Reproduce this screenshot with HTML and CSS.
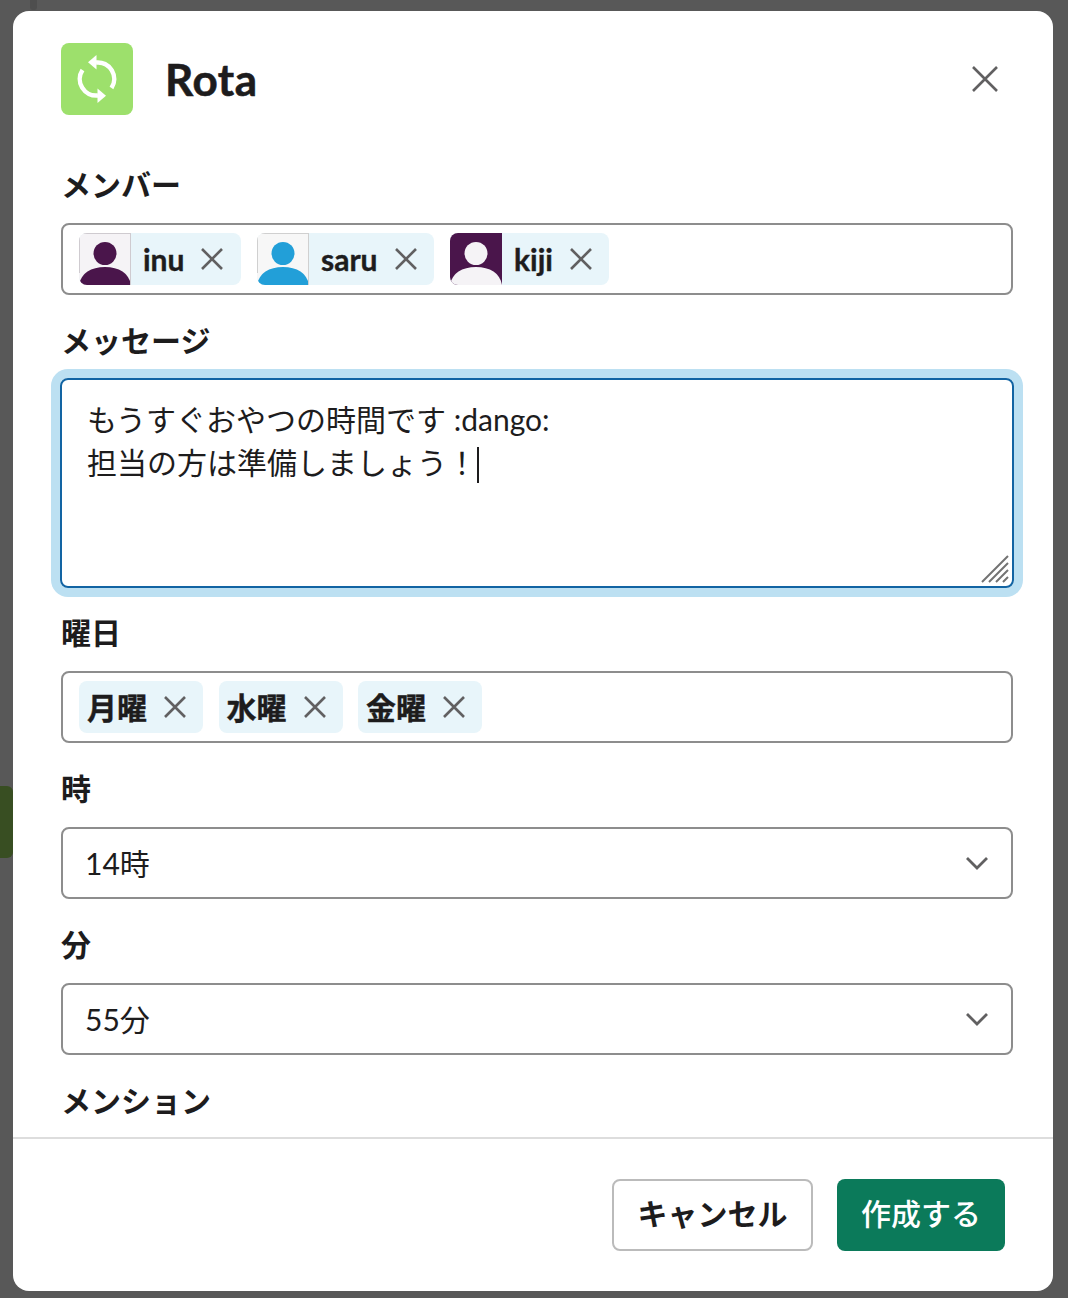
FILE: index.html
```html
<!DOCTYPE html>
<html lang="ja">
<head>
<meta charset="utf-8">
<title>Rota</title>
<link rel="stylesheet" href="styles.css">
</head>
<body>
<div class="backdrop-bar"></div>
<div class="backdrop-btn"></div>
<main class="modal">
  <header class="modal-head">
    <div class="app-icon">
      <svg width="72" height="72" viewBox="0 0 72 72" fill="none">
        <path d="M35 19.5A16.500 16.500 0 0 1 50.500 45" stroke="#fff" stroke-width="4.500"/>
        <path d="M37 52.500A16.500 16.500 0 0 1 21.500 27" stroke="#fff" stroke-width="4.500"/>
        <path d="M35.500 12V26.500L27 19.300Z" fill="#fff"/>
        <path d="M36.500 45.500V60L45 52.700Z" fill="#fff"/>
      </svg>
    </div>
    <h1 class="title">Rota</h1>
    <svg class="close" width="28" height="28" viewBox="0 0 28 28"><path d="M2 2L26 26M26 2L2 26" stroke="#616061" stroke-width="2.600"/></svg>
  </header>
  <div class="modal-body">
    <label class="label">メンバー</label>
    <div class="field chips">
      <span class="chip"><svg class="avatar" viewBox="0 0 52 52"><rect width="52" height="52" fill="#f5f3f6"/><circle cx="26" cy="20.500" r="11.500" fill="#4a154b"/><path d="M0 52C2 40 12 34 26 34S50 40 52 52Z" fill="#4a154b"/><path d="M51.500 0V52M0 .5H52M.5 0V40" fill="none" stroke="#cfcbd0"/></svg><b>inu</b><svg class="x" viewBox="0 0 24 24"><path d="M2 2L22 22M22 2L2 22"/></svg></span>
      <span class="chip"><svg class="avatar" viewBox="0 0 52 52"><rect width="52" height="52" fill="#f7f7f7"/><circle cx="26" cy="20.500" r="11.500" fill="#229fd8"/><path d="M0 52C2 40 12 34 26 34S50 40 52 52Z" fill="#229fd8"/><path d="M51.500 0V52M0 .5H52M.5 0V40" fill="none" stroke="#d0d0d0"/></svg><b>saru</b><svg class="x" viewBox="0 0 24 24"><path d="M2 2L22 22M22 2L2 22"/></svg></span>
      <span class="chip"><svg class="avatar" viewBox="0 0 52 52"><rect width="52" height="52" fill="#4a154b"/><circle cx="26" cy="20.500" r="11.500" fill="#f5f3f6"/><path d="M0 52C2 40 12 34 26 34S50 40 52 52Z" fill="#f5f3f6"/></svg><b>kiji</b><svg class="x" viewBox="0 0 24 24"><path d="M2 2L22 22M22 2L2 22"/></svg></span>
    </div>
    <label class="label">メッセージ</label>
    <div class="textarea">
      <div>もうすぐおやつの時間です :dango:</div>
      <div>担当の方は準備しましょう！<span class="caret"></span></div>
      <svg class="grip" width="28" height="28" viewBox="0 0 28 28"><path d="M1 27L27 1M8 27L27 8M15 27L27 15M22 27L27 22" stroke="#737373" stroke-width="2"/></svg>
    </div>
    <label class="label">曜日</label>
    <div class="field chips days">
      <span class="chip day"><b>月曜</b><svg class="x" viewBox="0 0 24 24"><path d="M2 2L22 22M22 2L2 22"/></svg></span>
      <span class="chip day"><b>水曜</b><svg class="x" viewBox="0 0 24 24"><path d="M2 2L22 22M22 2L2 22"/></svg></span>
      <span class="chip day"><b>金曜</b><svg class="x" viewBox="0 0 24 24"><path d="M2 2L22 22M22 2L2 22"/></svg></span>
    </div>
    <label class="label">時</label>
    <div class="field select"><span>14時</span><svg class="chev" width="24" height="14" viewBox="0 0 24 14" fill="none"><path d="M2 2L12 12L22 2" stroke="#616061" stroke-width="2.800"/></svg></div>
    <label class="label">分</label>
    <div class="field select"><span>55分</span><svg class="chev" width="24" height="14" viewBox="0 0 24 14" fill="none"><path d="M2 2L12 12L22 2" stroke="#616061" stroke-width="2.800"/></svg></div>
    <label class="label">メンション</label>
  </div>
  <footer class="modal-foot">
    <button class="btn cancel">キャンセル</button>
    <button class="btn primary">作成する</button>
  </footer>
</main>
</body>
</html>
```
FILE: styles.css
```css
* { box-sizing: border-box; }
html, body { margin: 0; height: 100%; }
body {
  background: #585858;
  font-family: Lato, "Noto Sans CJK JP", sans-serif;
  color: #1d1c1d;
  font-size: 30px;
  overflow: hidden;
  padding: 11px 15px 7px 13px;
}
.backdrop-bar { position: absolute; left: 30px; top: 0; width: 7px; height: 10px; background: #4e4e4e; border-radius: 0 0 3px 3px; }
.backdrop-btn { position: absolute; left: 0; top: 786px; width: 13px; height: 72px; background: #384e22; border-radius: 0 6px 6px 0; }
.modal {
  position: relative;
  width: 1040px;
  height: 1280px;
  background: #fff;
  border-radius: 16px;
  display: flex;
  flex-direction: column;
  overflow: hidden;
}
.modal-head { display: flex; align-items: center; padding: 32px 48px 0; height: 104px; flex: none; }
.app-icon { width: 72px; height: 72px; background: #9de06c; border-radius: 8px; flex: none; }
.app-icon svg { display: block; }
.title { margin: 0 0 0 32px; font-size: 44px; line-height: 72px; font-weight: 700; flex: 1; -webkit-text-stroke: 0.6px #1d1c1d; letter-spacing: 0.6px; }
.close { margin-right: 6px; flex: none; }
.modal-body { flex: 1; min-height: 0; overflow: hidden; padding: 0 40px 0 48px; }
.label { display: block; font-weight: 700; line-height: 44px; height: 44px; margin: 23px 0 17px; }
.modal-body > .label:first-child { margin-top: 47px; }
.field { height: 72px; border: 2px solid #8d8d8d; border-radius: 8px; background: #fff; }
.chips { display: flex; align-items: center; gap: 16px; padding-left: 16px; }
.chips.days { gap: 15.5px; }
.chip { display: flex; align-items: center; height: 52px; background: #e8f5fa; border-radius: 8px; overflow: hidden; padding-right: 16.500px; }
.chip b { font-weight: 700; margin-left: 12px; line-height: 52px; -webkit-text-stroke: 0.4px #1d1c1d; }
.chip.day { padding-right: 16px; }
.chip.day b { margin-left: 8px; }
.avatar { width: 52px; height: 52px; flex: none; display: block; }
.x { width: 24px; height: 24px; margin-left: 16px; flex: none; }
.x path { stroke: #616061; stroke-width: 2.600; fill: none; }
.textarea {
  position: relative;
  height: 210px;
  margin-top: -1px;
  margin-bottom: -1px;
  border: 2px solid #1264a3;
  border-radius: 8px;
  box-shadow: 0 0 0 9px #bce0f2;
  padding: 18px 25px;
  line-height: 43px;
  width: 954px;
  margin-left: -1px;
}
.caret { display: inline-block; width: 2px; height: 36px; background: #1d1c1d; vertical-align: -9px; }
.grip { position: absolute; right: 3px; bottom: 3px; }
.select { display: flex; align-items: center; justify-content: space-between; padding: 0 22px; }
.select span { margin-top: -2px; }
.chev { flex: none; }
.modal-foot {
  flex: none;
  height: 154px;
  border-top: 2px solid #dddddd;
  display: flex;
  justify-content: flex-end;
  align-items: flex-start;
  gap: 24px;
  padding: 40px 48px 0 0;
}
.btn { height: 72px; border-radius: 8px; font: 700 30px Lato, "Noto Sans CJK JP", sans-serif; padding: 0 0 6px; }
.cancel { width: 201px; background: #fff; border: 2px solid #bbbbbb; color: #1d1c1d; }
.primary { width: 168px; background: #0b7a5a; border: 0; color: #fff; font-weight: 500; }
```
